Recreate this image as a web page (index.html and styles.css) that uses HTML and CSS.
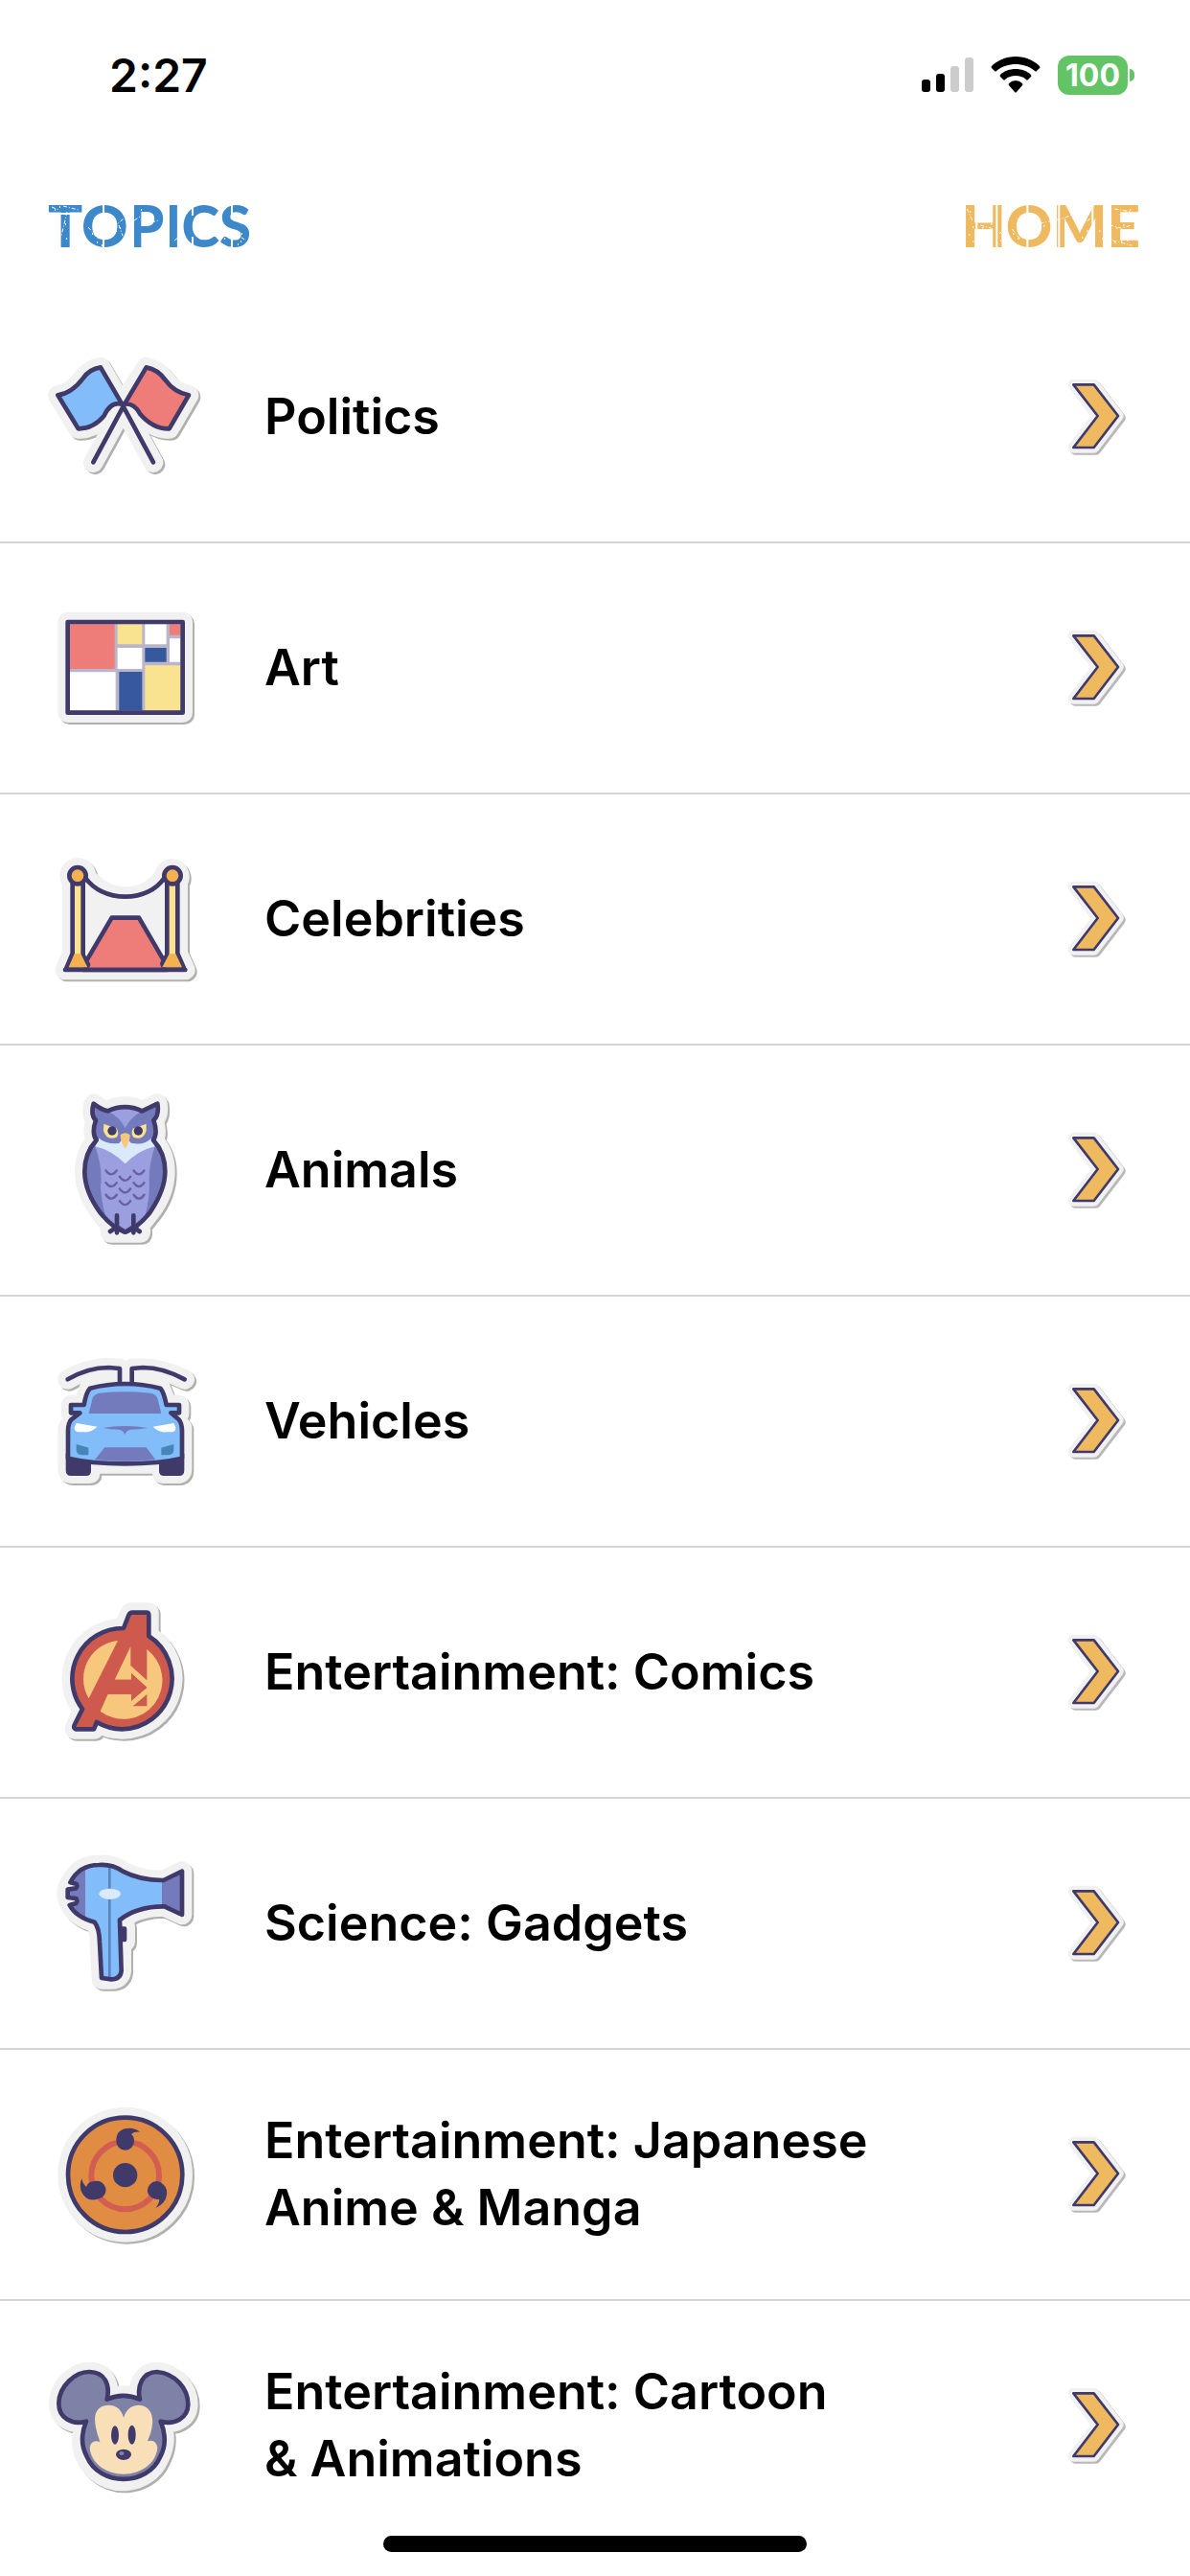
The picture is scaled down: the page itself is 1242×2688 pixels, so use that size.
FILE: index.html
```html
<!DOCTYPE html>
<html lang="en">
<head>
  <meta charset="UTF-8">
  <meta name="viewport" content="width=device-width, initial-scale=1.0">
  <title>Topics</title>
  <link rel="stylesheet" href="styles.css">
</head>
<body>
  <!-- shared arrow -->
  <svg class="defs" width="0" height="0" aria-hidden="true">
    <symbol id="chevron" viewBox="96 66 192 258">
      <path class="base-thin" d="M121 94H185L261 192L185 291H121L197 192Z"/>
      <path class="chevron-shape" d="M121 94H185L261 192L185 291H121L197 192Z"/>
    </symbol>
  </svg>

  <div class="app">
    <div class="status-bar">
      <span class="time">2:27</span>
      <div class="status-icons">
        <svg class="signal" viewBox="0 0 54 38" aria-hidden="true">
          <rect x="0" y="24" width="9" height="13" rx="3"/>
          <rect x="15" y="18" width="9" height="19" rx="3"/>
          <rect class="off" x="30" y="10" width="9" height="27" rx="3"/>
          <rect class="off" x="45" y="1" width="9" height="36" rx="3"/>
        </svg>
        <svg class="wifi" viewBox="0 0 52 38" aria-hidden="true">
          <path d="M26 0C36 0 45 4 51 10Q52 11 51 12L48 15Q47 16 46 15C40 10 33 8 26 8S12 10 6 15Q5 16 4 15L1 12Q0 11 1 10C7 4 16 0 26 0Z"/>
          <path d="M26 13C32 13 38 15 42 19Q43 20 42 21L39 24Q38 25 37 24C34 21 30 20 26 20S18 21 15 24Q14 25 13 24L10 21Q9 20 10 19C14 15 20 13 26 13Z"/>
          <path d="M26 25Q30 25 33 28Q34 29 33 30L27 37Q26 38 25 37L19 30Q18 29 19 28Q22 25 26 25Z"/>
        </svg>
        <span class="battery">100</span>
      </div>
    </div>

    <header class="header">
      <h1 class="title topics">TOPICS
        <svg class="wear" viewBox="0 0 208 46" aria-hidden="true">
          <path class="cut" d="M0 10H33M56 0V11M56 33V46M87 0V46M124 0V46M149 0V12M149 34V46M190 0V13M190 32V46"/>
          <path class="scratch" d="M2 3L9 6M14 2L30 6M18 8L12 33M40 24L51 37M60 30L77 15M72 22L76 33M88 17L94 13M106 19L113 17M116 24L123 30M130 38L140 30M178 31L190 35M192 30L205 38"/>
          <path class="specks" d="M5 6h1M10 3h1M16 21h1M22 26h1M17 36h1M23 40h1M44 31h1M49 40h1M54 43h1M69 28h1M73 25h1M81 33h1M84 38h1M83 12h1M95 6h1M117 34h1M120 39h1M118 28h1M135 30h1M141 39h1M182 36h1M194 34h1M200 31h1M199 39h1M196 42h1"/>
        </svg>
      </h1>
      <a class="title home" href="#">HOME
        <svg class="wear" viewBox="0 0 176 46" aria-hidden="true">
          <path class="cut" d="M11 0V46M32 0V46M64 0V13M64 33V46M97 0V46M132 0V46M149 0V46"/>
          <path class="scratch" d="M1 5L7 18M15 22L29 26M35 31L40 25M48 26L57 37M77 20L98 16L111 11M119 23L130 15M150 22L162 25L173 22M155 5L173 8M153 38L173 43"/>
          <path class="specks" d="M4 8h1M7 24h1M3 32h1M7 39h1M17 25h1M26 21h1M37 31h1M36 38h1M49 31h1M54 36h1M81 23h1M91 19h1M103 24h1M126 28h1M121 35h1M144 17h1M139 28h1M142 36h1M155 40h1M162 39h1M168 38h1M157 25h1M164 22h1M171 6h1"/>
        </svg>
      </a>
    </header>

    <nav class="topic-list">
      <a class="topic" href="#">
        <svg class="topic-icon" viewBox="0 -15 540 540" aria-hidden="true">
          <path class="base" d="M61 187Q105 181 141 133Q159 106 195 100L262 215L338 100Q374 106 398 140Q425 178 471 187L410 292Q359 293 316 243Q295 211 266 225Q232 208 207 253Q171 293 125 292Z"/>
          <path class="base" d="M266 226L172 398M266 226L360 398"/>
          <path class="line blue" d="M61 187Q105 181 141 133Q159 106 195 100L262 215Q226 205 205 253Q171 293 125 292Z"/>
          <path class="line red" d="M471 187Q425 178 398 140Q374 106 338 100L270 215Q300 211 318 245Q359 293 410 292Z"/>
          <path class="line" d="M270 215L172 397M262 215L360 397"/>
        </svg>
        <span class="topic-name">Politics</span>
        <svg class="chevron" aria-hidden="true"><use href="#chevron"/></svg>
      </a>

      <a class="topic" href="#">
        <svg class="topic-icon" viewBox="0 -39 540 540" aria-hidden="true">
          <rect class="base" x="92" y="87" width="360" height="284"/>
          <rect class="grey" x="92" y="87" width="360" height="284"/>
          <path class="red" d="M99 94H239V234H99ZM411 94H445V128H411Z"/>
          <path class="yellow" d="M248 94H325V157H248ZM334 223H445V364H334Z"/>
          <path class="white" d="M99 244H242V364H99ZM248 168H325V234H248ZM334 94H401V157H334ZM411 139H445V212H411Z"/>
          <path class="navy" d="M253 243H325V364H253ZM334 168H401V212H334Z"/>
          <rect class="line" x="92" y="87" width="360" height="284"/>
        </svg>
        <span class="topic-name">Art</span>
        <svg class="chevron" aria-hidden="true"><use href="#chevron"/></svg>
      </a>

      <a class="topic" href="#">
        <svg class="topic-icon" viewBox="0 -33 540 540" aria-hidden="true">
          <path class="base" d="M123 77A24 24 0 0 1 149 105Q200 166 272 167T394 105A24 24 0 1 1 437 119V345L460 396H84L106 345V119A24 24 0 0 1 123 77Z"/>
          <path class="line red" d="M140 396V386L230 233H315L404 386V396Z"/>
          <path class="line" d="M148 109C174 144 218 167 272 167S370 144 394 109"/>
          <path class="line yellow" d="M107 105H140V350L156 380L150 395H86L107 345ZM403 105H436V345L458 395H395L388 376L403 350Z"/>
          <path class="orange" d="M113 346H133L154 388H95ZM410 346H430L450 388H388Z"/>
          <circle class="line orange" cx="123" cy="101" r="26"/>
          <circle class="line orange" cx="420" cy="101" r="26"/>
          <path class="line" d="M84 396H460"/>
        </svg>
        <span class="topic-name">Celebrities</span>
        <svg class="chevron" aria-hidden="true"><use href="#chevron"/></svg>
      </a>

      <a class="topic" href="#">
        <svg class="topic-icon" viewBox="0 18 540 540" aria-hidden="true">
          <path class="base" d="M173 80Q195 98 217 103Q272 73 325 103L373 80Q379 116 361 132Q375 172 360 194Q397 235 397 292Q397 360 350 420L320 458V484H225V458Q145 372 145 292Q145 235 182 194Q166 172 180 132Q163 116 173 80Z"/>
          <path class="slate" d="M173 80Q195 98 217 103Q272 73 325 103L373 80Q379 116 361 132Q375 172 360 194Q397 235 397 292Q397 360 350 420Q308 475 272 482Q235 475 193 420Q145 355 145 292Q145 235 182 194Q166 172 180 132Q163 116 173 80Z"/>
          <path class="lilac" d="M178 214Q202 280 195 340Q198 390 210 430Q240 470 272 480Q306 470 335 430Q350 370 347 320Q346 270 365 214L340 200H204Z"/>
          <path class="lilac" d="M217 103Q272 75 325 103Q290 125 272 157Q254 125 217 103Z"/>
          <path class="ice" d="M178 214L190 188H353L366 214Q315 225 272 268Q228 225 178 214Z"/>
          <path class="slate" d="M180 125L217 103Q255 122 272 157Q290 122 325 103L364 125Q375 175 353 188Q333 212 290 203L272 180L253 204Q210 207 190 188Q170 163 180 125Z"/>
          <path class="yellow" d="M205 143L246 158Q254 174 245 185Q214 197 204 165ZM338 143L296 158Q289 174 298 185Q328 197 338 165Z"/>
          <circle class="dark" cx="231" cy="165" r="14"/>
          <circle class="dark" cx="313" cy="165" r="14"/>
          <path class="peach" d="M257 178Q272 165 287 178Q287 200 272 221Q257 200 257 178Z"/>
          <path class="feather" d="M210 287Q228 315 247 287M253 306Q272 335 290 306M297 287Q315 315 333 287M210 325Q228 353 247 325M253 344Q272 373 290 344M297 325Q315 353 333 325M210 363Q228 391 247 363M253 382Q272 411 290 382M297 363Q315 391 333 363"/>
          <path class="line" d="M173 80Q195 98 217 103Q272 78 325 103L373 80Q379 116 361 132Q375 172 360 194Q397 235 397 292Q397 350 350 420Q310 470 272 482Q233 470 193 420Q145 355 145 292Q145 235 182 194Q166 172 180 132Q163 116 173 80Z"/>
          <path class="line" d="M246 430V484M246 466L225 480M246 466L268 480M298 430V484M298 466L276 480M298 466L317 480"/>
        </svg>
        <span class="topic-name">Animals</span>
        <svg class="chevron" aria-hidden="true"><use href="#chevron"/></svg>
      </a>

      <a class="topic" href="#">
        <svg class="topic-icon" viewBox="0 -21 540 540" aria-hidden="true">
          <path class="base" d="M92 118Q155 82 220 81L255 84V132H293V84Q375 76 458 118"/>
          <path class="base" d="M160 144Q272 118 382 144L402 196L441 198V224L420 232L450 270V400Q450 413 438 413H388V382H162V413H105Q92 413 92 400V270L122 235L102 222V198L141 196Z"/>
          <path class="dark" d="M86 350H165V405Q165 420 150 420H102Q86 420 86 402ZM378 350H457V402Q457 420 441 420H394Q378 420 378 405Z"/>
          <path class="line blue" d="M162 146Q215 132 272 132T382 146Q393 158 401 198H441V223H415L440 244Q450 256 450 280V365Q380 382 272 382T93 365V280Q93 256 103 244L130 223H102V198H143Q149 160 162 146Z"/>
          <path class="slate" d="M158 225L169 180Q174 163 192 161Q272 153 351 161Q369 163 374 180L385 225Z"/>
          <path class="slate" d="M202 270Q272 258 342 270Q315 275 290 275Q275 278 271 291Q267 278 252 275Q225 275 202 270ZM208 331H338L367 370Q272 378 177 370Z"/>
          <path class="white" d="M119 255L184 266Q165 285 145 283H123Q112 280 113 268ZM424 255L359 266Q378 285 399 283H421Q431 280 430 268Z"/>
          <path class="teal" d="M119 321L157 332V355H139Q119 355 119 340ZM424 321L385 332V355H404Q424 355 424 340Z"/>
          <path class="line" d="M92 118Q155 81 220 81L255 84V130M293 130V84L328 81Q390 81 458 118"/>
        </svg>
        <span class="topic-name">Vehicles</span>
        <svg class="chevron" aria-hidden="true"><use href="#chevron"/></svg>
      </a>

      <a class="topic" href="#">
        <svg class="topic-icon" viewBox="0 -15 540 540" aria-hidden="true">
          <path class="base" d="M262 433A158 158 0 0 1 183 412L174 433H114L138 372A158 158 0 0 1 265 117L289 68H346V141A158 158 0 0 1 262 433Z"/>
          <path class="line brick" d="M262 433A158 158 0 0 1 183 411L174 433H117Q109 430 113 420L138 370A158 158 0 0 1 267 117L283 76Q287 68 294 68H338Q346 68 346 77V142A158 158 0 0 1 262 433Z"/>
          <path class="peach" d="M249 156A120 120 0 0 0 158 337ZM340 183A120 120 0 0 1 194 377L218 323H291V342L340 303L291 258V278H239L289 174V234L340 280Z"/>
          <path class="brick" d="M340 324V361H296ZM218 323H291V345L340 302L291 258V278H239Z"/>
        </svg>
        <span class="topic-name">Entertainment: Comics</span>
        <svg class="chevron" aria-hidden="true"><use href="#chevron"/></svg>
      </a>

      <a class="topic" href="#">
        <svg class="topic-icon" viewBox="0 -9 540 540" aria-hidden="true">
          <path class="base" d="M100 133Q128 78 190 78Q232 75 264 98Q320 127 392 126L450 98V234L395 208Q310 207 257 250V272H272V318H260V410Q257 436 228 436H198L192 320Q191 275 176 257Q118 242 98 200Q80 168 100 133Z"/>
          <path class="blue" d="M148 88Q170 78 190 78Q232 75 264 98Q320 127 388 126V208Q310 207 257 250L260 410Q257 436 228 436L198 432L192 320Q191 275 176 257Q160 253 148 245Z"/>
          <path class="slate" d="M148 88V245Q118 235 98 202L122 192V182L92 178V155H122V142L100 133Q118 98 148 88ZM387 126L450 98V234L395 208H387Z"/>
          <path class="seam" d="M223 86V430"/>
          <ellipse class="ice" cx="224" cy="169" rx="34" ry="17"/>
          <path class="line" d="M100 133Q128 78 190 78Q232 75 264 98Q320 127 392 126L450 98V234L395 208Q310 207 255 250L260 410Q257 436 228 436L198 432L192 320Q191 275 176 257Q118 242 98 204L118 198Q124 190 118 183L92 180V155L118 151Q124 143 118 137Z"/>
          <path class="dark" d="M255 271H271Q277 271 277 278V312Q277 319 271 319H255Z"/>
        </svg>
        <span class="topic-name">Science: Gadgets</span>
        <svg class="chevron" aria-hidden="true"><use href="#chevron"/></svg>
      </a>

      <a class="topic" href="#">
        <svg class="topic-icon" viewBox="0 -18 540 540" aria-hidden="true">
          <circle class="base" cx="272" cy="253" r="180"/>
          <circle class="line amber" cx="272" cy="253" r="179"/>
          <circle class="ring" cx="272" cy="255" r="106"/>
          <circle class="dark" cx="272" cy="254" r="38"/>
          <path class="dark" d="M244 148Q242 107 288 107Q307 108 319 119Q300 117 291 126Q300 132 300 148A28 28 0 0 1 244 148Z"/>
          <path class="dark" d="M190 328Q150 342 134 304Q128 283 136 264Q139 284 151 290Q155 274 176 273A28 28 0 0 1 190 328Z"/>
          <path class="dark" d="M383 277Q412 295 398 330Q389 347 367 357Q381 341 378 329Q360 333 346 316A28 28 0 0 1 383 277Z"/>
        </svg>
        <span class="topic-name">Entertainment: Japanese Anime &amp; Manga</span>
        <svg class="chevron" aria-hidden="true"><use href="#chevron"/></svg>
      </a>

      <a class="topic" href="#">
        <svg class="topic-icon" viewBox="0 -27 540 540" aria-hidden="true">
          <path class="base" d="M215 161Q266 138 318 161C308 120 325 76 372 75C428 80 469 127 469 177C468 220 427 242 383 230Q408 291 377 348C343 424 229 444 167 372Q116 311 150 230C105 242 64 220 64 173C65 119 116 74 160 75C208 76 226 114 215 161Z"/>
          <path class="line mouse" d="M215 161Q266 138 318 161C308 120 325 76 372 75C428 80 469 127 469 177C468 220 427 242 383 230Q408 291 382 340C343 434 191 434 152 340Q125 291 150 230C105 242 64 220 64 173C65 119 116 74 160 75C208 76 226 114 215 161Z"/>
          <path class="cream" d="M267 218C280 181 308 175 330 182C365 196 364 242 342 292Q368 285 373 312C370 361 321 395 267 395S164 361 161 312Q165 285 193 294C174 240 167 196 202 182C229 174 257 181 267 218Z"/>
          <ellipse class="dark" cx="240" cy="273" rx="12" ry="29"/>
          <ellipse class="dark" cx="293" cy="272" rx="12" ry="30"/>
          <ellipse class="dark" cx="267" cy="334" rx="24" ry="17"/>
          <ellipse class="mouse" cx="261" cy="330" rx="8" ry="6"/>
        </svg>
        <span class="topic-name">Entertainment: Cartoon &amp;&nbsp;Animations</span>
        <svg class="chevron" aria-hidden="true"><use href="#chevron"/></svg>
      </a>
    </nav>
  </div>
  <div class="home-indicator"></div>
</body>
</html>
```
FILE: styles.css
```css
* {
  margin: 0;
  padding: 0;
  box-sizing: border-box;
}

body {
  background-color: #fff;
  color: #000;
  font-family: Inter, "Liberation Sans", sans-serif;
}

.defs {
  position: absolute;
}

/* status bar */
.status-bar {
  display: flex;
  justify-content: space-between;
  align-items: center;
  height: 156px;
  padding: 0 58px 0 114px;
}

.time {
  font-size: 48px;
  font-weight: 600;
}

.status-icons {
  display: flex;
  align-items: center;
  gap: 18px;
}

.signal {
  width: 54px;
  height: 38px;
}

.off {
  fill: #ccc;
}

.wifi {
  width: 52px;
  height: 38px;
}

.battery {
  position: relative;
  width: 73px;
  height: 41px;
  margin-right: 7px;
  border-radius: 12px;
  background-color: #63c466;
  color: #fff;
  font-size: 32px;
  font-weight: 700;
  line-height: 41px;
  text-align: center;
}

.battery::after {
  content: "";
  position: absolute;
  top: 14px;
  right: -7px;
  width: 5px;
  height: 13px;
  border-radius: 0 5px 5px 0;
  background-color: #63c466;
}

/* header */
.header {
  display: flex;
  justify-content: space-between;
  align-items: center;
  height: 149px;
  padding: 8px 52px 0 50px;
}

.title {
  position: relative;
  font-family: Lato, "Liberation Sans", sans-serif;
  font-size: 60px;
  font-weight: 900;
  line-height: 72px;
  text-decoration: none;
}

.topics {
  color: #3d87cb;
}

.home {
  color: #efb95f;
}

.wear {
  position: absolute;
  left: 0;
  top: 14px;
  width: 100%;
  height: 46px;
  fill: none;
  stroke: #fff;
}

.cut {
  stroke-width: 2;
}

.scratch {
  stroke-width: 1;
  stroke-dasharray: 4 2 1 2;
}

.specks {
  stroke-width: 2;
}

/* topics */
.topic {
  display: flex;
  align-items: center;
  height: 262px;
  padding: 0 66px 0 40px;
  border-bottom: 2px solid #d4d4d4;
  color: #000;
  text-decoration: none;
}

.topic:last-child {
  border-bottom-color: transparent;
}

.topic-icon {
  flex-shrink: 0;
  width: 180px;
  height: 180px;
  margin-right: 56px;
  filter: drop-shadow(2px 2px 0 #b0b0ac);
}

.topic-name {
  max-width: 646px;
  font-size: 52px;
  font-weight: 600;
  line-height: 70px;
}

.chevron {
  flex-shrink: 0;
  width: 64px;
  height: 86px;
  margin-left: auto;
  filter: drop-shadow(2px 2px 0 #b8b8b8);
}

/* icon parts */
.base,
.base-thin {
  fill: #f1f1f1;
  stroke: #f1f1f1;
  stroke-width: 62;
  stroke-linejoin: round;
  stroke-linecap: round;
}

.base-thin {
  stroke-width: 34;
}

.line {
  fill: none;
  stroke: #403a6b;
  stroke-width: 14;
  stroke-linejoin: round;
  stroke-linecap: round;
}

.chevron-shape {
  fill: #efb95f;
  stroke: #403a6b;
  stroke-width: 8;
  stroke-linejoin: round;
}

.feather {
  fill: none;
  stroke: #6860a2;
  stroke-width: 7;
}

.ring {
  fill: none;
  stroke: #d15e50;
  stroke-width: 18;
}

.seam {
  stroke: #5d83bd;
  stroke-width: 8;
}

.dark { fill: #403a6b; }
.blue { fill: #82bcf9; }
.red { fill: #ee7d79; }
.yellow { fill: #f9e390; }
.white { fill: #fff; }
.navy { fill: #35599c; }
.grey { fill: #bab6ca; }
.orange { fill: #f5b14f; }
.slate { fill: #747bbc; }
.lilac { fill: #9b9fdf; }
.ice { fill: #dbeafb; }
.peach { fill: #f6c77d; }
.teal { fill: #4585b7; }
.brick { fill: #cd5a4d; }
.amber { fill: #e08c43; }
.mouse { fill: #7e82a6; }
.cream { fill: #f8dfb8; }

.home-indicator {
  position: fixed;
  bottom: 25px;
  left: 50%;
  width: 442px;
  height: 17px;
  margin-left: -221px;
  border-radius: 9px;
  background-color: #000;
}
```
